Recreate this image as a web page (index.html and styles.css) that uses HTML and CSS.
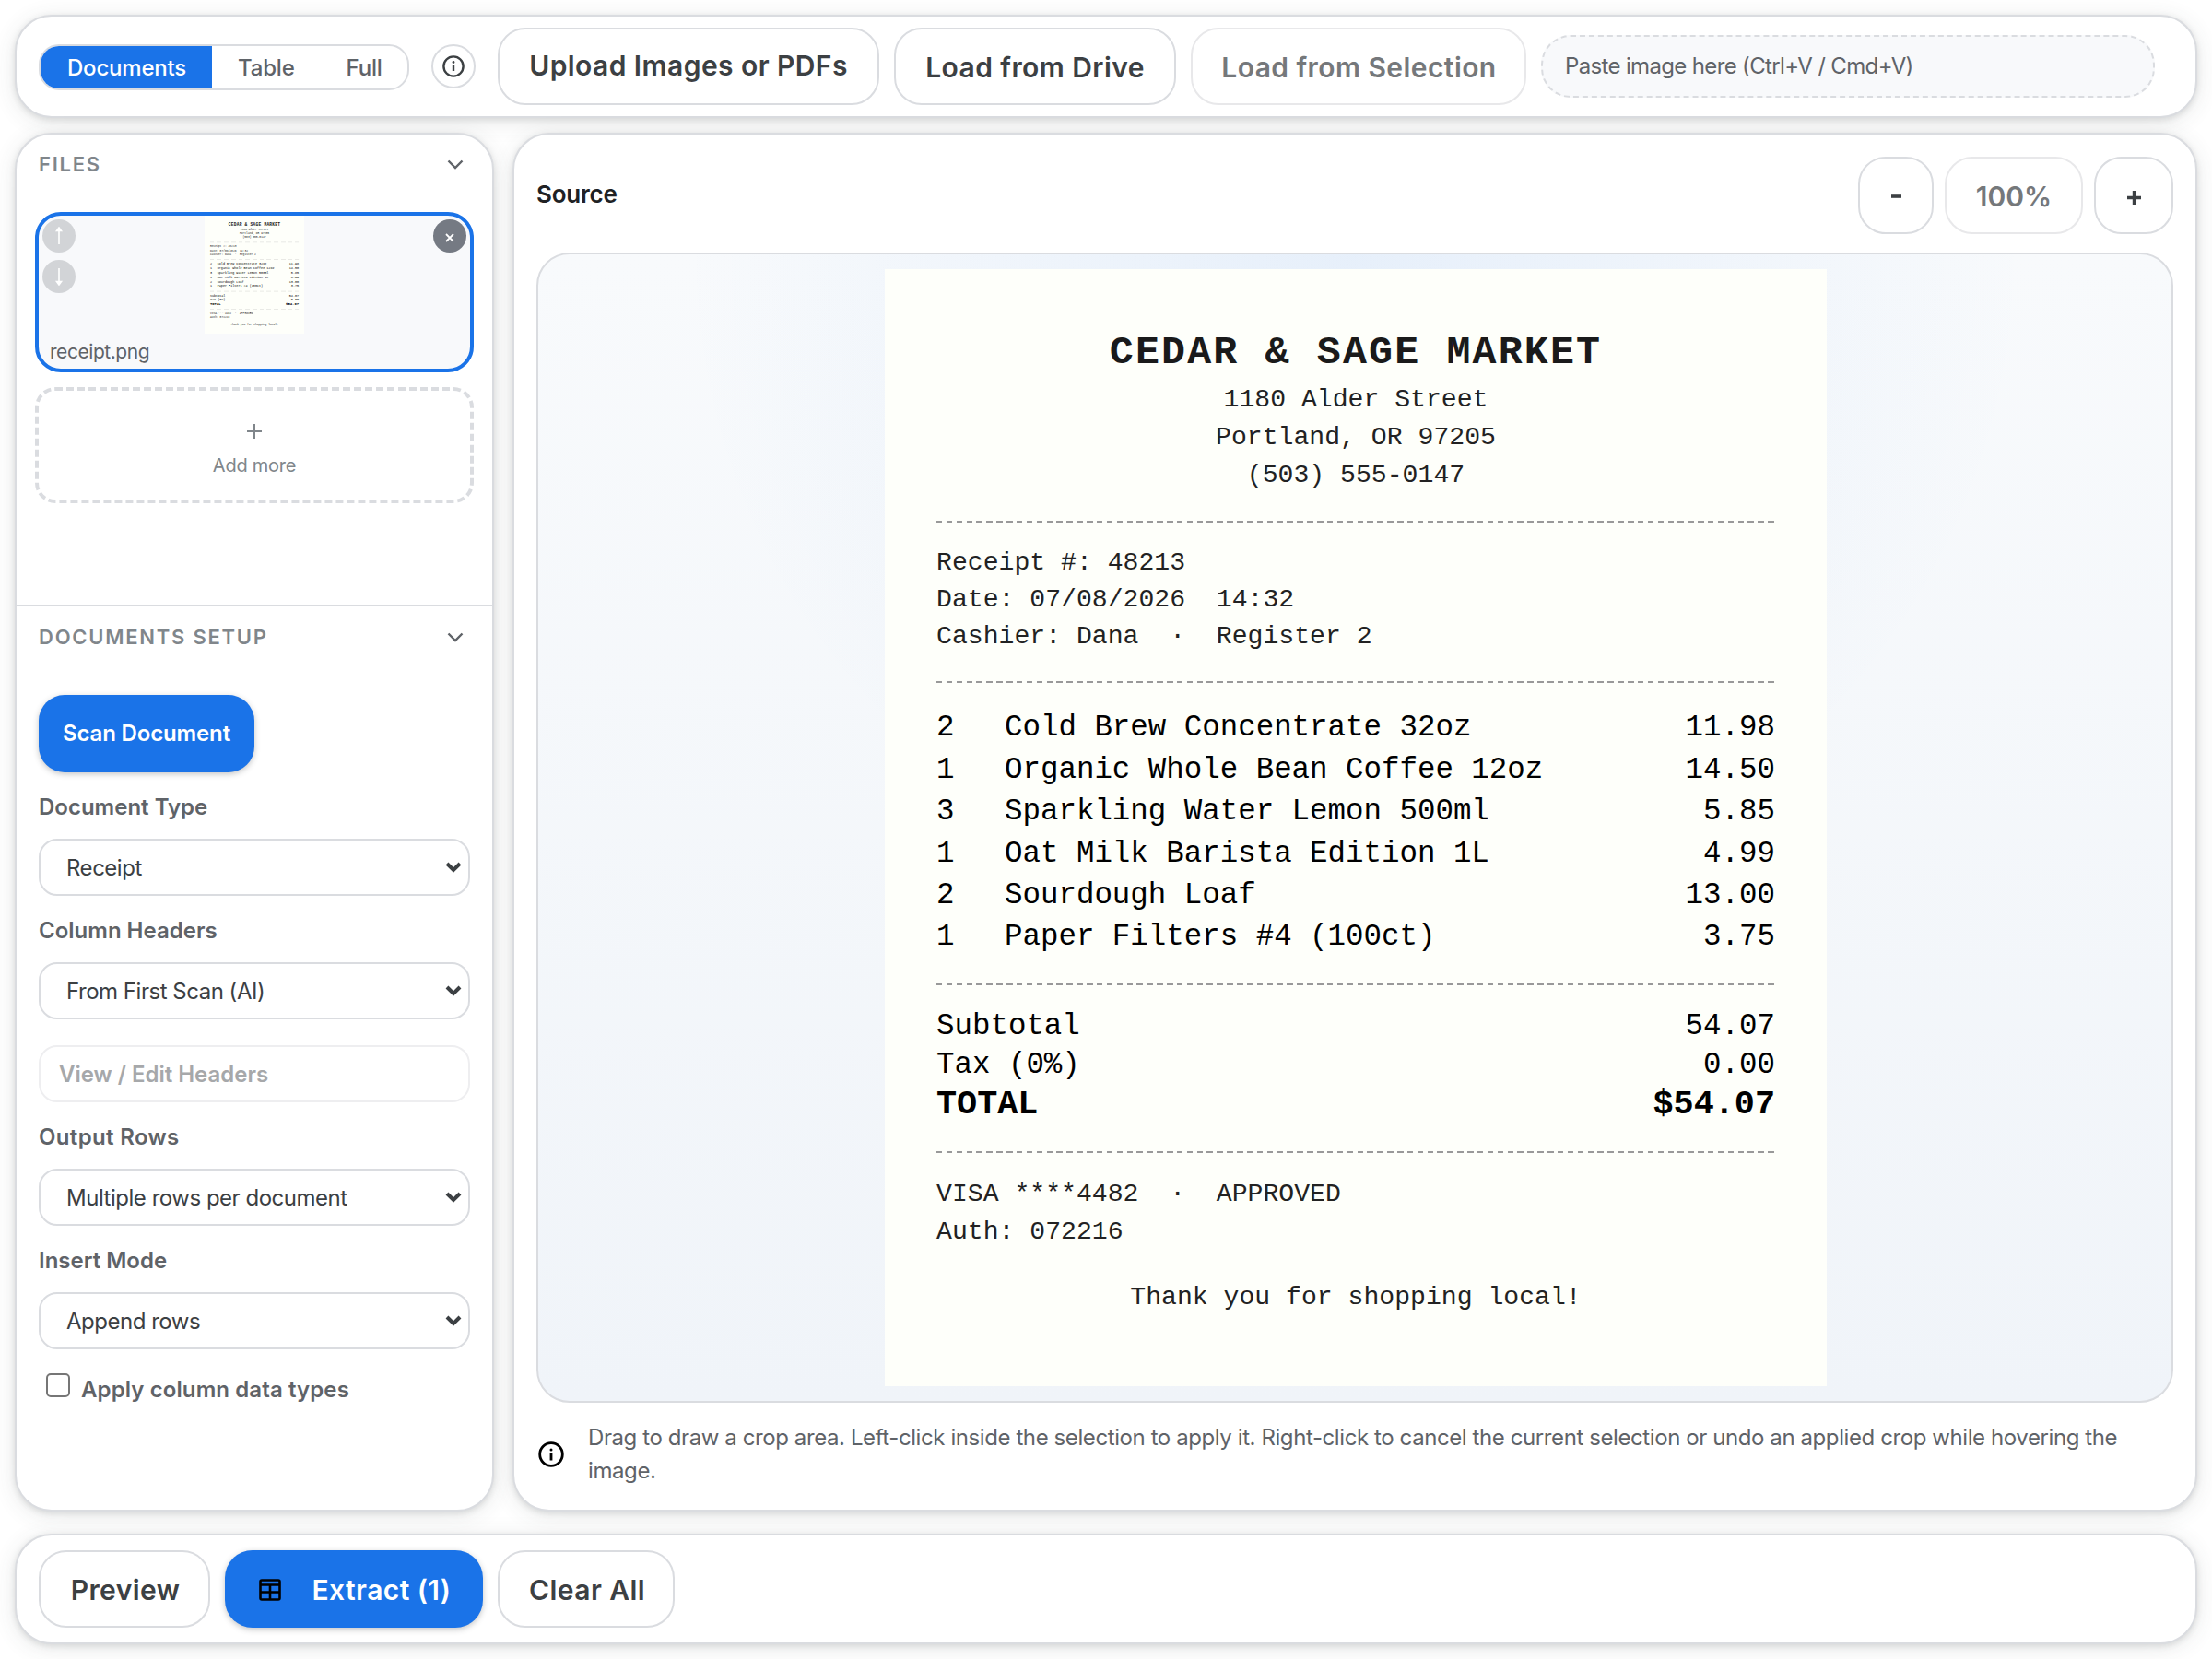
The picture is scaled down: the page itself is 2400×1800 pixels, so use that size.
FILE: index.html
```html
<!DOCTYPE html>
<html lang="en">
<head>
  <meta charset="utf-8">
  <title>Document Extractor</title>
  <link rel="stylesheet" href="styles.css">
</head>

<body>
  <div class="app">

    <!-- Toolbar -->
    <div class="panel toolbar">
      <div class="mode-toggle">
        <button class="mode active">Documents</button>
        <button class="mode">Table</button>
        <button class="mode">Full</button>
      </div>
      <button class="info-btn">
        <svg width="24" height="24" viewBox="0 0 24 24"><circle cx="12" cy="12" r="10.6"/><path d="M12 11v6"/><circle class="dot" cx="12" cy="7.5" r="1.4"/></svg>
      </button>
      <button class="btn btn-upload">Upload Images or PDFs</button>
      <button class="btn btn-drive">Load from Drive</button>
      <button class="btn btn-selection disabled">Load from Selection</button>
      <div class="paste-zone">Paste image here (Ctrl+V / Cmd+V)</div>
    </div>

    <div class="main">
      <!-- Sidebar -->
      <div class="panel sidebar">
        <div class="files">
          <div class="section-head">
            <span>FILES</span>
            <svg class="chev" width="18" height="12" viewBox="0 0 18 12"><path d="M1.5 1.5L9 9l7.5-7.5"/></svg>
          </div>
          <div class="file-card">
            <div class="thumb" id="thumb"></div>
            <div class="file-name">receipt.png</div>
            <div class="move-btns">
              <div class="round-btn"><svg width="12" height="20" viewBox="0 0 12 20"><path d="M6 19V2M3.500 4.500L6 1l2.500 3.500z"/></svg></div>
              <div class="round-btn"><svg width="12" height="20" viewBox="0 0 12 20"><path d="M6 1v17M3.500 15.500L6 19l2.500-3.500z"/></svg></div>
            </div>
            <div class="round-btn remove"><svg width="10" height="10" viewBox="0 0 10 10"><path d="M1 1l8 8M9 1L1 9"/></svg></div>
          </div>
          <div class="add-more">
            <svg width="18" height="18" viewBox="0 0 18 18"><path d="M9 1v16M1 9h16"/></svg>
            <span>Add more</span>
          </div>
        </div>

        <div class="setup">
          <div class="section-head">
            <span>DOCUMENTS SETUP</span>
            <svg class="chev" width="18" height="12" viewBox="0 0 18 12"><path d="M1.5 1.5L9 9l7.5-7.5"/></svg>
          </div>
          <button class="scan-btn">Scan Document</button>

          <label>Document Type</label>
          <div class="select"><span>Receipt</span><svg width="18" height="13" viewBox="0 0 18 13"><path d="M2 2l7 7 7-7"/></svg></div>

          <label>Column Headers</label>
          <div class="select"><span>From First Scan (AI)</span><svg width="18" height="13" viewBox="0 0 18 13"><path d="M2 2l7 7 7-7"/></svg></div>

          <div class="headers-btn">View / Edit Headers</div>

          <label class="wide">Output Rows</label>
          <div class="select"><span>Multiple rows per document</span><svg width="18" height="13" viewBox="0 0 18 13"><path d="M2 2l7 7 7-7"/></svg></div>

          <label>Insert Mode</label>
          <div class="select"><span>Append rows</span><svg width="18" height="13" viewBox="0 0 18 13"><path d="M2 2l7 7 7-7"/></svg></div>

          <div class="check-row">
            <div class="checkbox"></div>
            <span>Apply column data types</span>
          </div>
        </div>
      </div>

      <!-- Source viewer -->
      <div class="panel source">
        <div class="source-head">
          <span class="source-title">Source</span>
          <div class="zoom">
            <button class="btn zoom-out"><svg width="11" height="4" viewBox="0 0 11 4"><path d="M0 2h11"/></svg></button>
            <button class="btn zoom-level disabled">100%</button>
            <button class="btn zoom-in"><svg width="15" height="15" viewBox="0 0 15 15"><path d="M7.5 0v15M0 7.500h15"/></svg></button>
          </div>
        </div>

        <div class="viewer">
          <div class="receipt" id="receipt">
            <div class="r-title">CEDAR &amp; SAGE MARKET</div>
            <div class="r-address">
              <div>1180 Alder Street</div>
              <div>Portland, OR 97205</div>
              <div>(503) 555-0147</div>
            </div>
            <div class="r-line"></div>
            <div class="r-meta">
              <div>Receipt #: 48213</div>
              <div>Date: 07/08/2026&nbsp; 14:32</div>
              <div>Cashier: Dana&nbsp; ·&nbsp; Register 2</div>
            </div>
            <div class="r-line"></div>
            <div class="r-items">
              <div class="r-item"><span>2</span><span>Cold Brew Concentrate 32oz</span><span>11.98</span></div>
              <div class="r-item"><span>1</span><span>Organic Whole Bean Coffee 12oz</span><span>14.50</span></div>
              <div class="r-item"><span>3</span><span>Sparkling Water Lemon 500ml</span><span>5.85</span></div>
              <div class="r-item"><span>1</span><span>Oat Milk Barista Edition 1L</span><span>4.99</span></div>
              <div class="r-item"><span>2</span><span>Sourdough Loaf</span><span>13.00</span></div>
              <div class="r-item"><span>1</span><span>Paper Filters #4 (100ct)</span><span>3.75</span></div>
            </div>
            <div class="r-line"></div>
            <div class="r-totals">
              <div class="r-row"><span>Subtotal</span><span>54.07</span></div>
              <div class="r-row"><span>Tax (0%)</span><span>0.00</span></div>
              <div class="r-row r-total"><span>TOTAL</span><span>$54.07</span></div>
            </div>
            <div class="r-line"></div>
            <div class="r-pay">
              <div>VISA ****4482&nbsp; ·&nbsp; APPROVED</div>
              <div>Auth: 072216</div>
            </div>
            <div class="r-thanks">Thank you for shopping local!</div>
          </div>
        </div>

        <div class="hint">
          <svg width="28" height="28" viewBox="0 0 28 28"><circle cx="14" cy="14" r="12.3"/><path d="M14 13v7.5"/><circle class="dot" cx="14" cy="9" r="1.5"/></svg>
          <p>Drag to draw a crop area. Left-click inside the selection to apply it. Right-click to cancel the current selection or undo an applied crop while hovering the image.</p>
        </div>
      </div>
    </div>

    <!-- Footer actions -->
    <div class="panel footer">
      <button class="btn btn-preview">Preview</button>
      <button class="btn btn-extract">
        <svg width="24" height="24" viewBox="0 0 24 24"><rect x="1.5" y="1.5" width="21" height="21" rx="1.5"/><path d="M1.5 6.500h21M1.5 14.500h21M12 6.500v16"/></svg>
        <span>Extract (1)</span>
      </button>
      <button class="btn btn-clear">Clear All</button>
    </div>
  </div>

  <script>
    // the thumbnail is a scaled copy of the loaded page
    var copy = document.getElementById('receipt').cloneNode(true);
    copy.removeAttribute('id');
    document.getElementById('thumb').appendChild(copy);
  </script>
</body>
</html>
```
FILE: styles.css
```css
* {
  box-sizing: border-box;
}

body {
  margin: 0;
  background: #fff;
  color: #3c4043;
  font-family: Inter, "Open Sans", sans-serif;
  font-size: 24px;
}

button {
  margin: 0;
  padding: 0;
  border: 0;
  background: none;
  font-family: inherit;
  color: inherit;
}

svg {
  display: block;
  flex: none;
  fill: none;
  stroke: currentColor;
}

.app {
  width: 2400px;
  height: 1800px;
  padding: 16px;
  overflow: hidden;
}

.panel {
  background: #fff;
  border: 2px solid #dadce0;
  border-radius: 40px;
  box-shadow: 0 2px 6px rgba(60, 64, 67, 0.14), 0 4px 24px rgba(60, 64, 67, 0.12);
}

/* toolbar */
.toolbar {
  height: 112px;
  display: flex;
  align-items: center;
  padding: 0 24px;
}

.mode-toggle {
  display: flex;
  width: 402px;
  height: 50px;
  margin-top: 2px;
  border: 2px solid #dadce0;
  border-radius: 22px;
  overflow: hidden;
}

.mode {
  font-size: 24px;
  font-weight: 500;
  letter-spacing: -0.2px;
  color: #5f6368;
  padding: 0 28px;
}

.mode.active {
  padding: 0 28px 0 29px;
  background: #1a73e8;
  color: #fff;
}

.info-btn {
  display: flex;
  align-items: center;
  justify-content: center;
  width: 48px;
  height: 48px;
  margin: 0 24px;
  border: 2px solid #dadce0;
  border-radius: 50%;
  stroke-width: 2.4;
}

.dot {
  fill: currentColor;
  stroke: none;
}

.btn {
  display: flex;
  flex: none;
  align-items: center;
  justify-content: center;
  height: 84px;
  padding-top: 2px;
  border: 2px solid #dadce0;
  border-radius: 30px;
  font-size: 30px;
  font-weight: 600;
  letter-spacing: 0.43px;
  color: #3c4043;
}

.btn.disabled {
  border-color: #e8e8ea;
  color: #75787b;
}

.btn-upload {
  width: 414px;
  padding: 0 0 2px;
}

.btn-drive {
  width: 306px;
  margin-left: 16px;
}

.btn-selection {
  width: 364px;
  margin: 0 16px;
  padding-left: 1px;
}

.paste-zone {
  width: 666px;
  height: 68px;
  line-height: 64px;
  padding-left: 24px;
  border: 2px dashed #dadce0;
  border-radius: 32px;
  background: #f8f9fb;
  letter-spacing: -0.65px;
  color: #5f6368;
}

/* two columns */
.main {
  display: flex;
  gap: 20px;
  height: 1496px;
  margin: 16px 0 24px;
}

.sidebar {
  width: 520px;
}

.files {
  height: 512px;
  border-bottom: 2px solid #dadce0;
}

.section-head {
  display: flex;
  align-items: center;
  justify-content: space-between;
  height: 64px;
  padding: 0 31px 0 24px;
  font-size: 22px;
  font-weight: 600;
  letter-spacing: 1.75px;
  color: #80868b;
}

.chev {
  margin-top: 2px;
  stroke: #5f6368;
  stroke-width: 2.4;
}

.file-card {
  position: relative;
  width: 476px;
  height: 174px;
  margin: 20px 0 0 20px;
  border: 4px solid #1a73e8;
  border-radius: 28px;
  background: #f8f9fb;
}

.thumb {
  width: 108px;
  height: 128px;
  margin: 0 auto;
  overflow: hidden;
}

.thumb .receipt {
  transform: scale(0.1057);
  transform-origin: 0 0;
}

.file-name {
  padding: 2px 0 0 12px;
  font-size: 21px;
  line-height: 36px;
  letter-spacing: -0.45px;
  color: #5f6368;
}

.round-btn {
  display: flex;
  align-items: center;
  justify-content: center;
  width: 36px;
  height: 36px;
  border-radius: 50%;
  background: #d2d4d7;
  color: #fff;
  stroke-width: 1.8;
}

.move-btns {
  position: absolute;
  left: 4px;
  top: 4px;
  display: grid;
  gap: 8px;
}

.move-btns path {
  fill: #fff;
  stroke-width: 1.6;
}

.remove {
  position: absolute;
  right: 4px;
  top: 4px;
  background: #757a83;
}

.remove svg {
  margin-top: 3px;
}

.add-more {
  display: flex;
  flex-direction: column;
  align-items: center;
  width: 476px;
  height: 126px;
  margin: 16px 0 0 20px;
  padding-top: 35px;
  border: 4px dashed #dadce0;
  border-radius: 22px;
  font-size: 20px;
  line-height: 24px;
  letter-spacing: -0.25px;
  color: #80868b;
  stroke-width: 2;
}

.add-more span {
  margin-top: 16px;
}

/* documents setup */
.setup .section-head {
  height: 65px;
}

.scan-btn {
  display: block;
  width: 234px;
  height: 84px;
  margin: 31px 0 0 24px;
  padding-bottom: 2px;
  border-radius: 28px;
  background: #1a73e8;
  box-shadow: 0 2px 6px rgba(60, 64, 67, 0.3);
  color: #fff;
  font-size: 24px;
  font-weight: 600;
  letter-spacing: -0.15px;
}

.setup label {
  display: block;
  height: 72px;
  padding: 18px 0 0 24px;
  font-weight: 600;
  line-height: 40px;
  color: #5f6368;
}

.setup label.wide {
  letter-spacing: 0.35px;
}

.select {
  display: flex;
  align-items: center;
  justify-content: space-between;
  width: 468px;
  height: 62px;
  margin-left: 24px;
  padding: 0 7px 0 28px;
  border: 2px solid #dadce0;
  border-radius: 20px;
  letter-spacing: -0.48px;
  stroke-width: 4;
}

.headers-btn {
  width: 468px;
  height: 62px;
  margin: 28px 0 0 24px;
  padding-left: 20px;
  border: 2px solid #eeeef0;
  border-radius: 20px;
  line-height: 60px;
  font-weight: 600;
  color: #a6a8aa;
}

.check-row {
  display: flex;
  height: 60px;
  margin: 26px 0 0 32px;
  font-weight: 600;
  color: #5f6368;
}

.checkbox {
  width: 26px;
  height: 26px;
  margin-right: 12px;
  border: 2px solid #767676;
  border-radius: 5px;
}

.check-row span {
  line-height: 36px;
  letter-spacing: 0.1px;
}

/* source viewer */
.source {
  width: 1828px;
  padding: 24px;
}

.source-head {
  display: flex;
  justify-content: space-between;
  height: 104px;
}

.source-title {
  padding-top: 25px;
  font-size: 26px;
  font-weight: 600;
  letter-spacing: -0.2px;
  color: #202124;
}

.zoom {
  display: flex;
  gap: 12px;
}

.zoom-out {
  width: 82px;
  stroke-width: 3.6;
}

.zoom-level {
  width: 150px;
  letter-spacing: 0;
}

.zoom-in {
  width: 86px;
  padding-top: 5px;
  stroke-width: 3.4;
}

.viewer {
  display: flex;
  justify-content: center;
  height: 1248px;
  padding: 16px 0 0 2px;
  border: 2px solid #dadce0;
  border-radius: 36px;
  background:
    radial-gradient(circle at top, rgba(26, 115, 232, 0.08), transparent 48%),
    linear-gradient(180deg, #f8fafc, #f0f4f9);
}

.receipt {
  flex: none;
  width: 1022px;
  height: 1212px;
  padding: 60px 56px 0;
  background: #fefffa;
  color: #222;
  font-family: "Liberation Mono", monospace;
  font-size: 28.13px;
  line-height: 41px;
}

.r-title {
  height: 61px;
  font-size: 43.28px;
  font-weight: bold;
  letter-spacing: 2.16px;
  line-height: 62px;
  text-align: center;
  color: #1a1a1a;
}

.r-address,
.r-thanks {
  text-align: center;
}

.r-address {
  height: 124px;
}

.r-line {
  height: 2px;
  margin: 28px 0 24px;
  background: repeating-linear-gradient(90deg, #999 0 6.5px, transparent 6.5px 10.87px);
}

.r-meta {
  padding-top: 0.4px;
  line-height: 40px;
}

.r-items,
.r-totals {
  color: #000;
  font-size: 32.46px;
}

.r-items {
  padding-top: 2px;
  margin-bottom: -1px;
  line-height: 45.4px;
}

.r-item {
  display: grid;
  grid-template-columns: 74px 1fr auto;
}

.r-totals {
  padding-top: 0.5px;
  line-height: 41.6px;
  padding-bottom: 2px;
}

.r-row {
  display: flex;
  justify-content: space-between;
}

.r-total {
  font-size: 36.8px;
  font-weight: bold;
  line-height: 42px;
}

.r-thanks {
  margin-top: 30.5px;
}

.hint {
  display: flex;
  align-items: center;
  padding: 20px 0 0 2px;
  color: #000;
  stroke-width: 2.8;
}

.hint p {
  margin: 0 0 0 26px;
  line-height: 36px;
  letter-spacing: -0.41px;
  color: #5f6368;
}

/* footer */
.footer {
  display: flex;
  align-items: center;
  gap: 16px;
  height: 120px;
  padding: 0 24px;
}

.footer .btn {
  padding-left: 2px;
}

.btn-preview {
  width: 186px;
}

.btn-extract {
  width: 280px;
  gap: 34px;
  border: 0;
  background: #1a73e8;
  box-shadow: 0 2px 6px rgba(60, 64, 67, 0.3);
}

.footer .btn-extract {
  color: #fff;
}

.btn-extract svg {
  color: #000;
  stroke-width: 2.6;
}

.btn-clear {
  width: 192px;
}
```
